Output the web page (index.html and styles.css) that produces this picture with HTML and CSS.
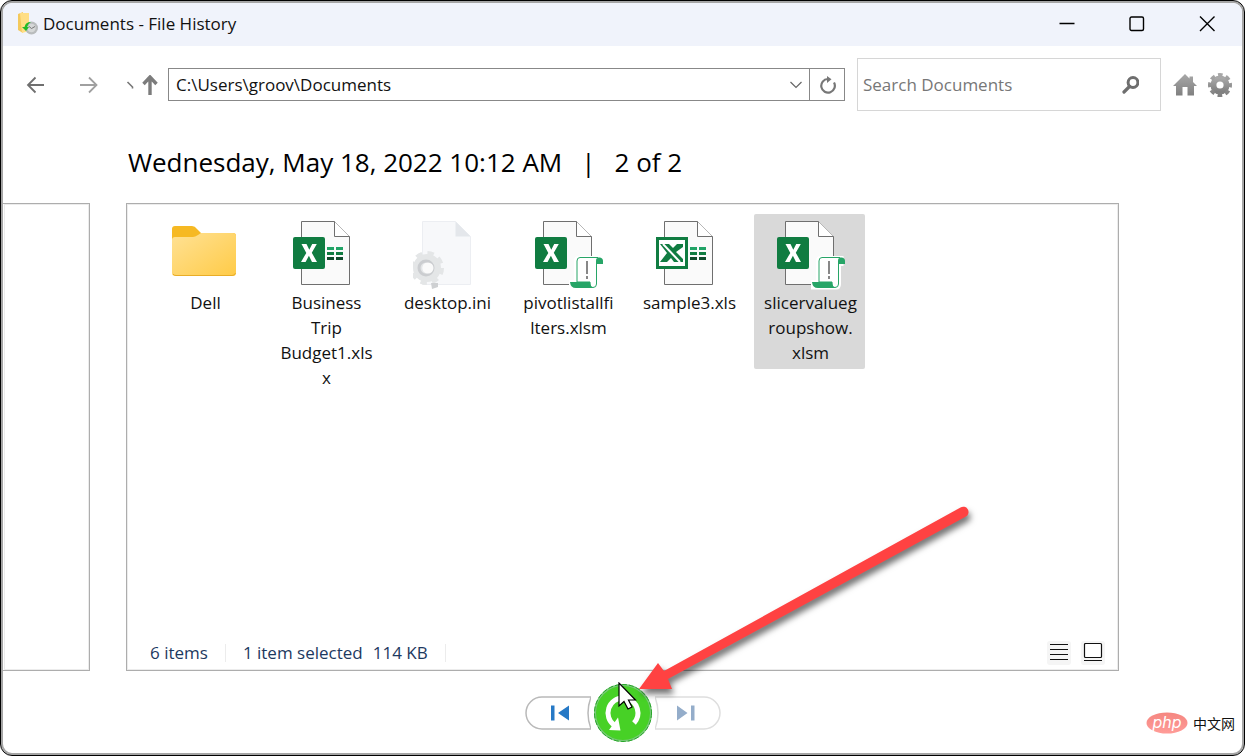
FILE: index.html
```html
<!DOCTYPE html>
<html lang="en">
<head>
<meta charset="utf-8">
<meta name="viewport" content="width=device-width, initial-scale=1">
<title>Documents - File History</title>
<link rel="stylesheet" href="styles.css">
</head>
<body>
<svg class="defs" aria-hidden="true">
  <defs>
    <linearGradient id="folder-fill" x1="0" y1="0" x2="1" y2="1"><stop offset="0" stop-color="#ffe194"/><stop offset="1" stop-color="#ffcb47"/></linearGradient>
    <linearGradient id="grey-fill" x1="0" y1="0" x2="0" y2="1"><stop offset="0" stop-color="#a8a8a8"/><stop offset="1" stop-color="#808080"/></linearGradient>
    <linearGradient id="php-fill" x1="0" y1="0" x2="0" y2="1"><stop offset="0" stop-color="#f58680"/><stop offset="1" stop-color="#ff9c98"/></linearGradient>
    <g id="sheet">
      <path d="M9.500 1.500H42.500L57.500 16.500V64.500H9.500Z" fill="#fafafa" stroke="#6f6f6f"/>
      <path d="M42.500 1.500V16.500H57.500" fill="#fff" stroke="#6f6f6f"/>
    </g>
    <g id="badge">
      <rect x="1" y="17" width="32" height="32" rx="2" fill="#107c41"/>
      <path d="M9.500 24H14.500L17.300 29.800L20.200 24H24.800L19.800 32.800L25 42H20L16.900 35.700L13.600 42H9L14.300 32.900Z" fill="#fff"/>
    </g>
    <g id="cells">
      <path d="M35 27h7v3h-7zM44 27h7v3h-7z" fill="#21a366"/>
      <path d="M35 32h7v3h-7zM44 32h7v3h-7z" fill="#107c41"/>
      <path d="M35 37h7v3h-7zM44 37h7v3h-7z" fill="#0f4a2b"/>
    </g>
    <g id="scroll">
      <path d="M45 37H66.500V45H64V64Q64 68.500 60 68.500H36V61H41V41Q41 37 45 37Z" fill="#fff" stroke="#fff" stroke-width="2"/>
      <path d="M46 37.500H64Q62.500 38.500 62.500 41V64Q62.500 67.500 59 67.500Q56 67.500 56 63V62H43V41Q43 37.500 46 37.500Z" fill="#fff" stroke="#27a567"/>
      <path d="M36 62H56Q56 67 60 68H42Q36.500 68 36 62Z" fill="#27a567"/>
      <path d="M62.500 44V41Q62.500 37 66 37.500Q69 38 69 41V44Z" fill="#27a567"/>
      <path d="M52 41h2v13h-2zM52 56h2v3h-2z" fill="#888"/>
    </g>
  </defs>
</svg>

<div class="window">
  <header class="titlebar">
    <svg class="app-icon" viewBox="0 0 21 23" aria-hidden="true">
      <path d="M1 2 6 0V21L1 18Z" fill="#f4c95c"/><path d="M3 1H12V19L5 21Z" fill="#ffde85"/>
      <circle cx="14.500" cy="16" r="6.500" fill="#b9bcbd"/><circle cx="14.500" cy="16" r="4.200" fill="#d6d8d8"/>
      <path d="M11.500 14 14.500 16.500 18 14.500" fill="none" stroke="#777" stroke-width="1"/>
      <path d="M14 10Q8.500 10 7.500 15H5L9 19L12 15H10Q10.500 12 14 10Z" fill="#22bb27"/>
    </svg>
    <h1 class="title">Documents - File History</h1>
    <div class="window-buttons">
      <button type="button" aria-label="Minimize"><svg viewBox="0 0 16 16"><path d="M.500 7.500H15.500"/></svg></button>
      <button type="button" aria-label="Maximize"><svg viewBox="0 0 16 16"><rect x="1" y="1" width="13.500" height="13.500" rx="1.500"/></svg></button>
      <button type="button" aria-label="Close"><svg viewBox="0 0 16 16"><path d="M1 .500 15.500 15M15.500 .500 1 15"/></svg></button>
    </div>
  </header>

  <nav class="toolbar" aria-label="Navigation">
    <button class="nav-back" type="button" aria-label="Back"><svg viewBox="0 0 20 18"><path d="M19 9H3M10.500 1.500 3 9 10.500 16.500" fill="none" stroke="#6f6f6f" stroke-width="1.800"/></svg></button>
    <button class="nav-forward" type="button" aria-label="Forward"><svg viewBox="0 0 20 18"><path d="M1 9H18M10 1.500 17.500 9 10 16.500" fill="none" stroke="#a0a0a0" stroke-width="1.800"/></svg></button>
    <button class="nav-recent" type="button" aria-label="Recent locations"><svg viewBox="0 0 8 18"><path d="M1.500 6 6.500 11V12.500" fill="none" stroke="#777" stroke-width="1.600"/></svg></button>
    <button class="nav-up" type="button" aria-label="Up"><svg viewBox="0 0 16 20"><path d="M8 20V3M1.500 9 8 2 14.500 9" fill="none" stroke="#7c7c7c" stroke-width="3.400"/></svg></button>
    <div class="address">
      <input type="text" aria-label="Address" value="C:\Users\groov\Documents">
      <button type="button" aria-label="Previous locations"><svg viewBox="0 0 12 8"><path d="M.500 1 6 6.500 11.500 1" fill="none" stroke="#666" stroke-width="1.200"/></svg></button>
    </div>
    <button class="refresh" type="button" aria-label="Refresh"><svg viewBox="0 0 18 18"><path d="M16 6.500A6.800 6.800 0 1 1 9.800 3" fill="none" stroke="#777" stroke-width="2.200"/><path d="M9 0 13.500 3.200 9 7Z" fill="#777"/></svg></button>
    <div class="search">
      <input type="search" aria-label="Search Documents" placeholder="Search Documents">
      <button type="button" aria-label="Search"><svg viewBox="0 0 18 18"><circle cx="12" cy="6.500" r="4.900" fill="none" stroke="#6e6e6e" stroke-width="3"/><path d="M8.500 10.500 3 16" stroke="#6e6e6e" stroke-width="3.200" stroke-linecap="round"/></svg></button>
    </div>
    <button class="home" type="button" aria-label="Home"><svg viewBox="0 0 24 24"><path d="M12 1 16.500 5.500V3.500H20V9L24 13H21V22.500H14.500V14H9.500V22.500H3V13H0Z" fill="url(#grey-fill)"/></svg></button>
    <button class="settings" type="button" aria-label="Settings"><svg viewBox="0 0 24 24"><g fill="none" stroke="url(#grey-fill)"><circle cx="12" cy="12" r="6.600" stroke-width="6"/><circle cx="12" cy="12" r="10.200" stroke-width="3.600" stroke-dasharray="4.600 3.411" stroke-dashoffset="2.300"/></g></svg></button>
  </nav>

  <h2 class="version"><span>Wednesday, May 18, 2022 10:12 AM</span><span>|</span><span>2 of 2</span></h2>

  <main class="panes">
    <section class="pane pane-previous" aria-label="Previous version"></section>
    <section class="pane pane-current" aria-label="Current version">
      <ul class="files">
        <li><button type="button" class="file">
          <svg viewBox="0 0 70 70"><path d="M1 9Q1 6 4 6H21Q24 6 26 9L30 13H62Q65 13 65 16V30H1Z" fill="#f6b923"/><path d="M1 20Q1 17 4 17H22Q24 17 27 15L30 13H62Q65 13 65 16V53Q65 56 62 56H4Q1 56 1 53Z" fill="url(#folder-fill)"/><path d="M2 54Q3 55.500 5 55.500H61Q64 55.500 64.500 53" fill="none" stroke="#e9ad27"/></svg>
          <span>Dell</span></button></li>
        <li><button type="button" class="file">
          <svg viewBox="0 0 70 70"><use href="#sheet"/><use href="#badge"/><use href="#cells"/></svg>
          <span>Business<br>Trip<br>Budget1.xls<wbr>x</span></button></li>
        <li><button type="button" class="file">
          <svg viewBox="0 0 70 70"><path d="M9.500 1.500H42.500L57.500 16.500V64.500H9.500Z" fill="#f7f8fa" stroke="#eceef2"/><path d="M42.500 1.500V16.500H57.500Z" fill="#e4e7eb"/><g transform="translate(14 48)"><circle r="9.500" fill="none" stroke="#e4e6e7" stroke-width="9"/><circle r="14.500" fill="none" stroke="#e4e6e7" stroke-width="5" stroke-dasharray="6.200 5.188"/><circle r="7" cx="-1" fill="none" stroke="#cbcdd0" stroke-width="3"/><circle r="5.500" cx="1" fill="#fafafa"/><path d="M4 15h7v4l-6 2z" fill="#ced0d2"/></g></svg>
          <span>desktop.ini</span></button></li>
        <li><button type="button" class="file">
          <svg viewBox="0 0 70 70"><use href="#sheet"/><use href="#badge"/><use href="#scroll"/></svg>
          <span>pivotlistallfi<br>lters.xlsm</span></button></li>
        <li><button type="button" class="file">
          <svg viewBox="0 0 70 70"><use href="#sheet"/><rect x="2.500" y="18.500" width="29" height="29" fill="#fff" stroke="#107c41" stroke-width="3"/><path d="M5 24H14L18 28L22 24H28V27L21 32L28 39V42H19L16 38L12 42H5L12 33Z" fill="#107c41"/><path d="M8 24 25 42" stroke="#fff" stroke-width="2"/><use href="#cells"/></svg>
          <span>sample3.xls</span></button></li>
        <li><button type="button" class="file selected" aria-pressed="true">
          <svg viewBox="0 0 70 70"><use href="#sheet"/><use href="#badge"/><use href="#scroll"/></svg>
          <span>slicervalueg<br>roupshow.<br>xlsm</span></button></li>
      </ul>
      <footer class="status">
        <span class="status-part">6 items</span>
        <span class="status-part"><span>1 item selected</span><span>114 KB</span></span>
        <span class="views">
          <button type="button" aria-label="Details view"><svg viewBox="0 0 24 24"><path d="M3 3.500H21M3 8.500H21M3 13.500H21M3 18.500H21" stroke="#111" stroke-width="1.200"/></svg></button>
          <button type="button" aria-label="Large icons view"><svg viewBox="0 0 24 24"><rect x="3.500" y="2.500" width="17" height="14" rx="1" fill="#fff" stroke="#111" stroke-width="1.200"/><path d="M3 19.500H21" stroke="#111" stroke-width="1.200"/></svg></button>
        </span>
      </footer>
    </section>
  </main>

  <div class="player">
    <button class="step" type="button" aria-label="Previous version"><svg viewBox="0 0 66 34"><path d="M66 1H17A16 16 0 0 0 17 33H66Q60 17 66 1Z" fill="#fff" stroke="#b9b9b9" stroke-width="1.500"/><path d="M26 9.500h3.500v15H26zM44 9.500v15L33 17z" fill="#2679c6"/></svg></button>
    <button class="restore" type="button" aria-label="Restore"><svg viewBox="0 0 58 58"><circle cx="29" cy="29" r="28" fill="#47d126" stroke="#79c979" stroke-width="2"/><circle cx="29" cy="29" r="28.500" fill="none" stroke="#27a529" stroke-dasharray="5 2"/><path d="M29 14A15 15 0 0 0 20 41M33 14.500A15 15 0 0 1 40 39" fill="none" stroke="#fff" stroke-width="5"/><path d="M15 46 24 33.500 26.500 46.500Z" fill="#fff"/></svg></button>
    <button class="step" type="button" aria-label="Next version"><svg viewBox="0 0 66 34"><path d="M0 1H49A16 16 0 0 1 49 33H0Q6 17 0 1Z" fill="#fff" stroke="#dedede" stroke-width="1.500"/><path d="M36 9.500h3.500v15h-3.500zM22 9.500v15L32.500 17z" fill="#94adca"/></svg></button>
    <svg class="pointer" viewBox="0 0 20 28" aria-hidden="true"><path d="M1 1V24L6 19.500L10 27L14 25L10.500 18H17.500Z" fill="#fff" stroke="#000" stroke-width="1.200"/></svg>
    <svg class="callout" viewBox="0 0 340 194" aria-hidden="true"><path d="M322.500 4.500A5 5 0 0 1 328 13.500L30 176L34 186H1L20 160L26 168Z" fill="#ff4242"/></svg>
    <div class="brand"><svg viewBox="0 0 42 22" role="img" aria-label="php"><ellipse cx="21" cy="11" rx="20.500" ry="10.500" fill="url(#php-fill)"/><text x="21" y="16" text-anchor="middle">php</text></svg><span lang="zh">中文网</span></div>
  </div>
</div>
</body>
</html>
```
FILE: styles.css
```css
* { box-sizing: border-box; }
html { background: #fff; }
body {
  margin: 0;
  font-family: "Open Sans", "Noto Sans", sans-serif;
  font-size: 17px;
  line-height: 25px;
  color: #111;
}
button, input { font: inherit; color: inherit; margin: 0; padding: 0; border: 0; background: none; }
button { display: flex; align-items: center; justify-content: center; flex: none; }
svg { display: block; flex: none; }
.defs { position: absolute; width: 0; height: 0; }

.window {
  min-height: 100vh;
  display: flex;
  flex-direction: column;
  overflow: hidden;
  background: #fff;
  border: 1px solid #000;
  border-radius: 12px;
  box-shadow: inset 0 0 0 2px #a5a5a5;
  padding: 2px;
}

.titlebar { display: flex; align-items: center; height: 43px; padding: 0 0 2px 14px; background: #f0f3fb; border-radius: 9px 9px 0 0; }
.app-icon { width: 21px; height: 23px; }
.title { flex: 1; margin: 0 0 0 5px; font-size: 17px; font-weight: 400; }
.window-buttons { display: flex; }
.window-buttons button { width: 70px; height: 41px; }
.window-buttons svg { width: 16px; height: 16px; fill: none; stroke: #000; stroke-width: 1.4; }

.toolbar { display: flex; align-items: center; padding: 12px 10px 0 22px; }
.nav-back svg, .nav-forward svg { width: 20px; height: 18px; }
.nav-forward { margin-left: 34px; }
.nav-recent { margin-left: 27px; }
.nav-recent svg { width: 8px; height: 18px; }
.nav-up { margin-left: 8px; }
.nav-up svg { width: 16px; height: 20px; }
.address { flex: 1; display: flex; height: 33px; margin-left: 10px; border: 1px solid #888; }
.address input { flex: 1; min-width: 0; padding-left: 7px; }
.address button { width: 27px; }
.address svg { width: 12px; height: 8px; }
.refresh { width: 36px; height: 33px; margin-left: -1px; border: 1px solid #888; }
.refresh svg { width: 18px; height: 18px; }
.search { display: flex; width: 304px; height: 53px; margin-left: 12px; border: 1px solid #d6d6d6; }
.search input { flex: 1; min-width: 0; padding-left: 5px; }
.search input::placeholder { color: #777; opacity: 1; }
.search button { width: 60px; }
.search svg { width: 18px; height: 18px; }
.home { margin-left: 12px; }
.settings { margin-left: 11px; }
.home svg, .settings svg { width: 24px; height: 24px; }

.version { display: flex; gap: 19px; margin: 0; padding: 33px 0 23px 125px; font-size: 26px; line-height: 36px; font-weight: 400; color: #000; }

.panes { flex: 1; display: flex; gap: 36px; padding-right: 123px; }
.pane { border: 1px solid #adadad; outline: 1px solid #ececec; outline-offset: -2px; }
.pane-previous { width: 87px; border-left: 0; }
.pane-current { flex: 1; display: flex; flex-direction: column; }
.files { flex: 1; display: flex; flex-wrap: wrap; align-content: flex-start; gap: 10px; margin: 0; padding: 10px 22px; list-style: none; }
.file { flex-direction: column; width: 111px; padding: 6px 7px 4px 9px; }
.file svg { width: 70px; height: 70px; }
.file span { width: 100%; text-align: center; overflow-wrap: anywhere; }
.selected { background: #d9d9d9; border-radius: 2px; }

.status { display: flex; align-items: center; height: 34px; padding: 0 13px 0 23px; color: #1d395f; }
.status-part { display: flex; gap: 10px; padding-right: 17px; margin-right: 17px; border-right: 1px solid #ececec; line-height: 18px; }
.views { display: flex; gap: 10px; margin-left: auto; }
.views button { background: #f5f5f5; border-radius: 3px; }
.views svg { width: 24px; height: 24px; }

.player { position: relative; display: flex; justify-content: center; align-items: center; gap: 3px; padding: 13px 0 11px; }
.step svg { width: 66px; height: 34px; }
.restore svg { width: 58px; height: 58px; }
.pointer { position: absolute; left: 50%; top: 11px; width: 20px; height: 28px; margin-left: -5px; }
.callout { position: absolute; left: 50%; bottom: 56px; width: 340px; height: 194px; margin-left: 15px; overflow: visible; filter: drop-shadow(2px 5px 3px rgba(0, 0, 0, .55)); pointer-events: none; }
.brand { position: absolute; right: 7px; bottom: 18px; display: flex; align-items: center; gap: 5px; font: 14px/24px "Noto Sans CJK SC", sans-serif; }
.brand svg { width: 42px; height: 22px; }
.brand text { font: italic 16px Inter, sans-serif; fill: #fff; }
```
